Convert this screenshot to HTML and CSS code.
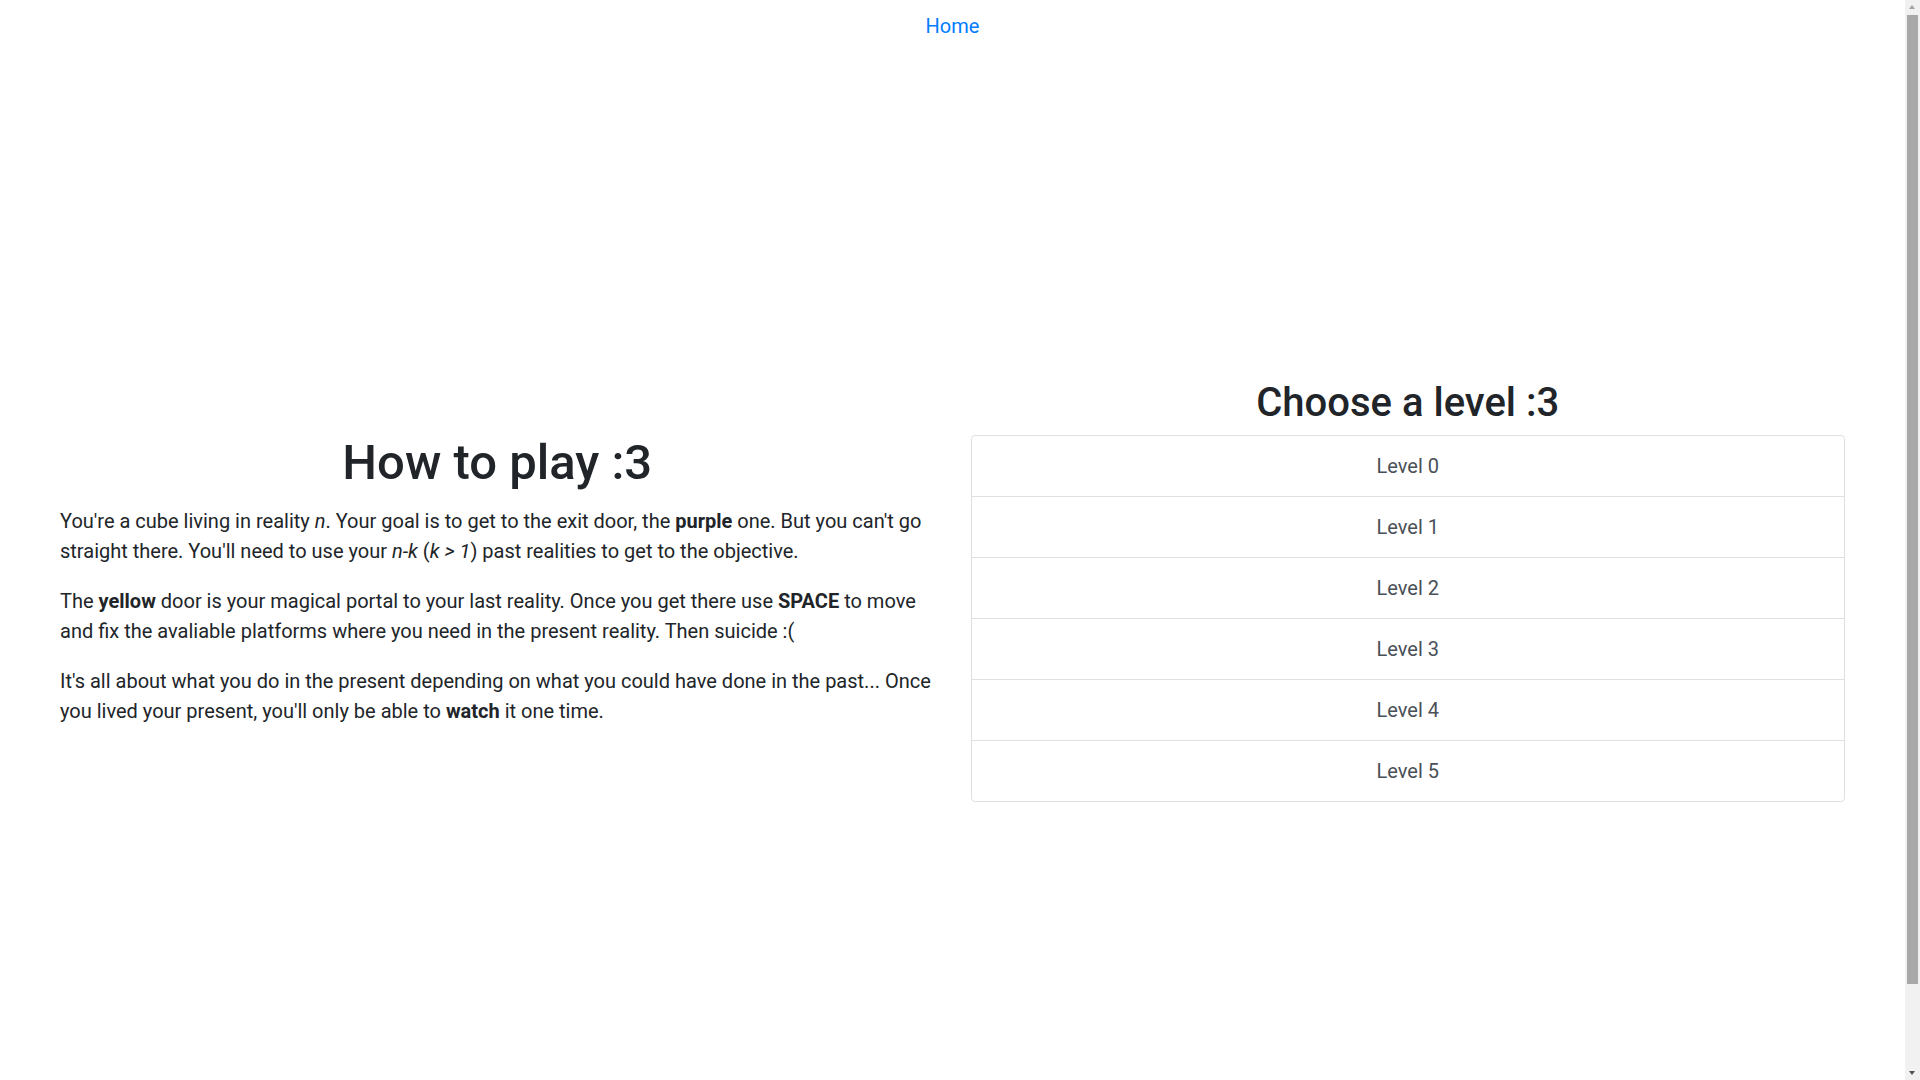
FILE: index.html
```html
<!DOCTYPE html>
<html lang="en">
<head>
<meta charset="utf-8">
<title>How to play :3</title>
<link rel="stylesheet" href="styles.css">
</head>
<body>
<div class="page">
  <nav class="topnav">
    <a class="nav-link" href="#">Home</a>
  </nav>
  <main class="main">
    <section class="howto">
      <h1 class="howto-title">How to play :3</h1>
      <p class="text">You're a cube living in reality <i>n</i>. Your goal is to get to the exit door, the <b>purple</b> one. But you can't go straight there. You'll need to use your <i>n-k</i> (<i>k &gt; 1</i>) past realities to get to the objective.</p>
      <p class="text">The <b>yellow</b> door is your magical portal to your last reality. Once you get there use <b>SPACE</b> to move and fix the avaliable platforms where you need in the present reality. Then suicide :(</p>
      <p class="text">It's all about what you do in the present depending on what you could have done in the past... Once you lived your present, you'll only be able to <b>watch</b> it one time.</p>
    </section>
    <section class="levels">
      <h1 class="levels-title">Choose a level :3</h1>
      <div class="list-group">
        <a class="list-item" href="#">Level 0</a>
        <a class="list-item" href="#">Level 1</a>
        <a class="list-item" href="#">Level 2</a>
        <a class="list-item" href="#">Level 3</a>
        <a class="list-item" href="#">Level 4</a>
        <a class="list-item" href="#">Level 5</a>
      </div>
    </section>
  </main>
  <div class="bottom-space"></div>
</div>
<div class="scrollbar" aria-hidden="true">
  <div class="sb-arrow sb-up"></div>
  <div class="sb-track"><div class="sb-thumb"></div></div>
  <div class="sb-arrow sb-down"></div>
</div>
</body>
</html>
```
FILE: styles.css
```css
html, body {
  margin: 0;
  padding: 0;
  background: #fff;
}
body {
  font-family: Roboto, "Liberation Sans", Arial, sans-serif;
  color: #212529;
}
.page {
  width: 1905px;
}
.topnav {
  display: flex;
  justify-content: center;
  height: 50px;
  box-sizing: border-box;
  padding-top: 11px;
}
.nav-link {
  font-size: 20px;
  line-height: 30px;
  color: #007bff;
  text-decoration: none;
}
.main {
  height: 1080px;
  display: grid;
  grid-template-columns: 1fr 1fr;
  column-gap: 36px;
  align-items: center;
  padding: 0 60px;
}
.howto-title {
  font-size: 49px;
  font-weight: 500;
  line-height: 58px;
  text-align: center;
  margin: 0 0 14px;
}
.text {
  font-size: 20px;
  line-height: 30px;
  margin: 0 0 20px;
}
.levels-title {
  font-size: 40px;
  font-weight: 500;
  line-height: 48px;
  text-align: center;
  margin: 0 0 8px;
}
.list-group {
  display: flex;
  flex-direction: column;
  border: 1px solid #dfdfdf;
  border-radius: 4px;
}
.list-item {
  display: block;
  padding: 15px 20px 15px;
  font-size: 20px;
  line-height: 30px;
  text-align: center;
  color: #495057;
  text-decoration: none;
  border-top: 1px solid #dfdfdf;
}
.list-item:first-child {
  border-top: none;
}
.bottom-space {
  height: 40px;
}
.scrollbar {
  position: fixed;
  top: 0;
  right: 0;
  width: 15px;
  height: 100vh;
  background: #f1f1f1;
  display: flex;
  flex-direction: column;
}
.sb-arrow {
  height: 15px;
  flex: none;
  position: relative;
}
.sb-up::after,
.sb-down::after {
  content: "";
  position: absolute;
  left: 4px;
  width: 0;
  height: 0;
  border-left: 3.5px solid transparent;
  border-right: 3.5px solid transparent;
}
.sb-up::after {
  top: 5px;
  border-bottom: 4px solid #a3a3a3;
}
.sb-down::after {
  bottom: 5px;
  border-top: 4px solid #505050;
}
.sb-track {
  flex: 1;
  padding: 0 2px;
}
.sb-thumb {
  height: 969px;
  background: #a8a8a8;
}
```
